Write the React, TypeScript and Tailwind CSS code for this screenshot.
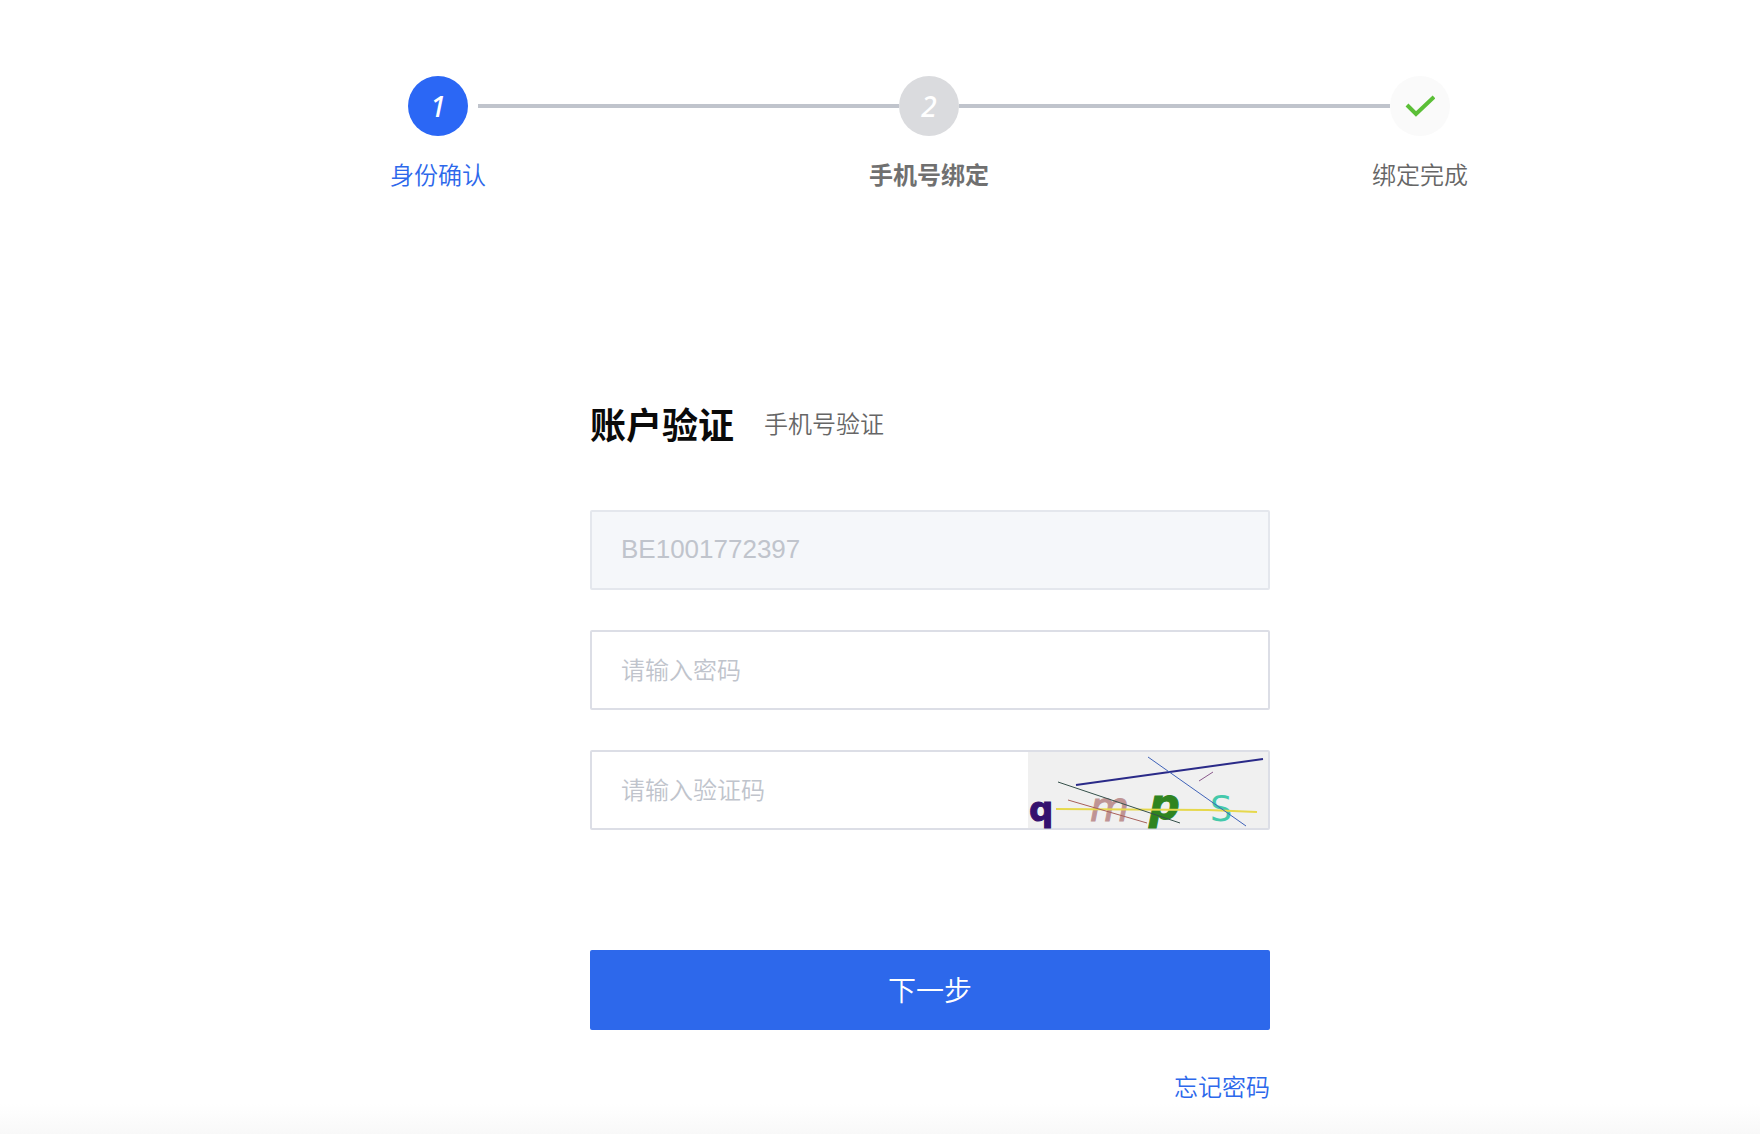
import React from "react";

const fieldClass =
  "block h-20 w-full rounded-xs border-2 px-7 pb-1 indent-px text-2xl outline-none placeholder:text-[#c0c4cc] placeholder:opacity-100";

function Connector({ className }: { className: string }) {
  return (
    <li aria-hidden="true" className="mt-7 flex-1">
      <div className={className}>
        <div className="h-1 bg-[#c0c4cc]" />
      </div>
    </li>
  );
}

function Step({
  label,
  circleClass,
  labelClass,
  children,
}: {
  label: string;
  circleClass: string;
  labelClass: string;
  children: React.ReactNode;
}) {
  return (
    <li className="flex w-[60px] shrink-0 flex-col items-center">
      <span
        className={`flex size-[60px] items-center justify-center rounded-full font-['Noto_Sans',sans-serif] text-[28px] leading-8 text-white italic ${circleClass}`}
      >
        {children}
      </span>
      <span className={`mt-5 text-2xl leading-9 whitespace-nowrap ${labelClass}`}>{label}</span>
    </li>
  );
}

function Captcha() {
  return (
    <svg
      viewBox="0 0 240 76"
      className="h-[76px] w-[240px] overflow-visible bg-[#f0f0f0] font-['DejaVu_Sans',sans-serif] font-normal"
      role="img"
      aria-label="验证码"
    >
      <text x="1" y="69" fontSize="34" fontWeight="700" fill="#34106e" stroke="#34106e">q</text>
      <text x="62" y="69" fontSize="40" fontStyle="italic" fill="#bf9494" stroke="#bf9494">m</text>
      <text x="121" y="67" fontSize="43" fontWeight="700" fontStyle="italic" fill="#2f8420" stroke="#2f8420">p</text>
      <text x="182" y="69" fontSize="35" fill="#45c9ab">S</text>
      <g fill="none" strokeWidth="1">
        <path d="M28 57 L180 58 L229 60" stroke="#e6d84c" strokeWidth="2" />
        <path d="M40 48 L119 71" stroke="#a8605a" />
        <path d="M30 30 L152 71" stroke="#35504a" />
        <path d="M48 33 L235 7" stroke="#2a2a88" strokeWidth="2" />
        <path d="M120 5 L218 74" stroke="#3f62b8" />
        <path d="M171 29 L185 20" stroke="#8a5a8c" />
      </g>
    </svg>
  );
}

export default function App() {
  return (
    <div className="flex min-h-screen flex-col bg-white font-['Noto_Sans_CJK_SC',sans-serif] font-[350]">
      <nav aria-label="绑定步骤" className="pt-[76px] pl-[98px]">
        <ol className="mx-auto flex w-full max-w-[1042px] items-start">
          <Step label="身份确认" circleClass="bg-[#2b67f5] font-medium" labelClass="text-[#2d68eb]">
            1
          </Step>
          <Connector className="pl-[10px]" />
          <Step label="手机号绑定" circleClass="bg-[#dadbde] font-medium" labelClass="font-bold text-[#707070]">
            2
          </Step>
          <Connector className="" />
          <Step label="绑定完成" circleClass="bg-[#fafafa]" labelClass="text-[#666666]">
            <svg viewBox="0 0 30 22" className="h-[22px] w-[30px]" fill="none" stroke="#5bbf37" strokeWidth="4" aria-hidden="true">
              <path d="M2 10 L11 19 L29 2" />
            </svg>
          </Step>
        </ol>
      </nav>

      <main className="grow pt-[204px] pl-[100px]">
        <form className="mx-auto w-full max-w-[680px]" onSubmit={(e) => e.preventDefault()}>
          <div className="flex items-center gap-[30px]">
            <h1 className="text-4xl leading-[54px] font-bold text-[#0a0a0a]">账户验证</h1>
            <p className="text-2xl text-[#666666]">手机号验证</p>
          </div>

          <div className="mt-[60px] flex flex-col gap-10">
            <input
              aria-label="账户"
              type="text"
              disabled
              value="BE1001772397"
              readOnly
              className="block h-20 w-full rounded-xs border-2 border-[#e4e7ed] bg-[#f5f7fa] px-7 pb-0.5 indent-px font-['Liberation_Sans',sans-serif] text-[26px] text-[#c0c4cc]"
            />
            <input aria-label="密码" type="password" placeholder="请输入密码" className={`${fieldClass} border-[#dcdee6]`} />
            <div className="flex h-20 rounded-xs border-2 border-[#dcdee6]">
              <input
                aria-label="验证码"
                type="text"
                placeholder="请输入验证码"
                className="min-w-0 flex-1 px-7 pb-0.5 indent-px text-2xl outline-none placeholder:text-[#c0c4cc] placeholder:opacity-100"
              />
              <Captcha />
            </div>
          </div>

          <button type="submit" className="mt-[120px] h-20 w-full rounded-xs bg-[#2d68eb] pb-0.5 text-[28px] text-white">
            下一步
          </button>
          <div className="mt-[38px] flex justify-end">
            <a href="#forgot" className="text-2xl leading-9 text-[#2d68eb]">
              忘记密码
            </a>
          </div>
        </form>
      </main>

      <div className="h-9 bg-linear-to-b from-white to-[#f7f7f7]" />
    </div>
  );
}
